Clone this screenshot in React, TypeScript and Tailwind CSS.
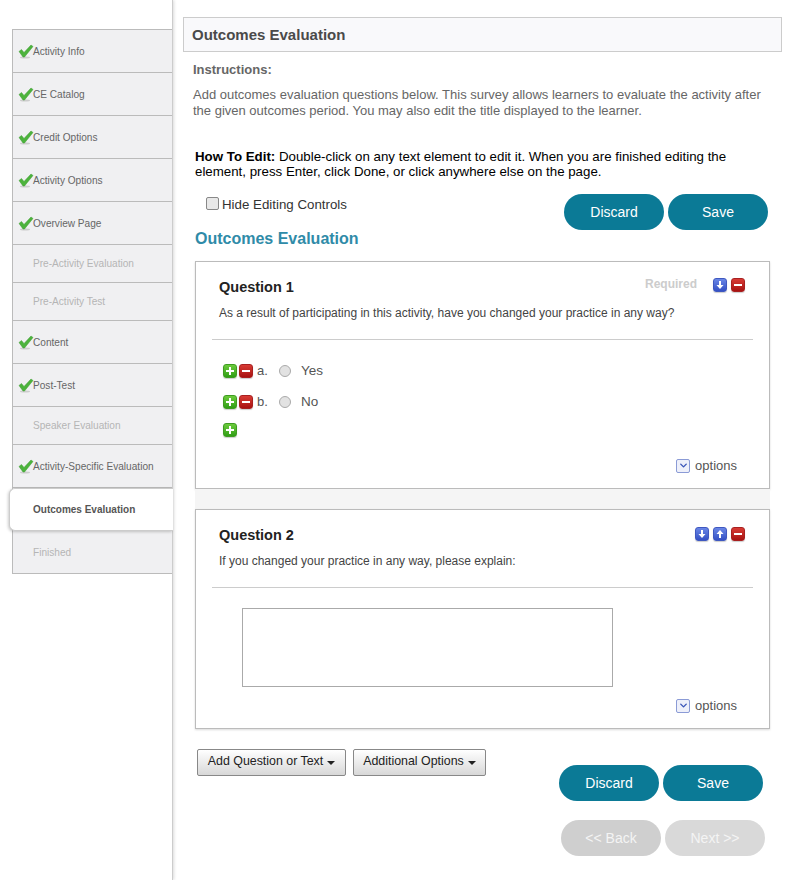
import { ChevronDown } from 'lucide-react'

const FONT = "font-['Liberation_Sans',Arial,sans-serif]"

const steps = [
  { label: 'Activity Info', state: 'done' },
  { label: 'CE Catalog', state: 'done' },
  { label: 'Credit Options', state: 'done' },
  { label: 'Activity Options', state: 'done' },
  { label: 'Overview Page', state: 'done' },
  { label: 'Pre-Activity Evaluation', state: 'off' },
  { label: 'Pre-Activity Test', state: 'off' },
  { label: 'Content', state: 'done' },
  { label: 'Post-Test', state: 'done' },
  { label: 'Speaker Evaluation', state: 'off' },
  { label: 'Activity-Specific Evaluation', state: 'done' },
  { label: 'Outcomes Evaluation', state: 'active' },
  { label: 'Finished', state: 'last' },
]

function Check() {
  return (
    <svg width="16" height="15" viewBox="0 0 16 15" className="absolute left-[5px] top-[14px]">
      <ellipse cx="7" cy="13.5" rx="5" ry="1" fill="#ccc" />
      <path d="M1 7.5 L3.5 5.5 L6 8.5 L13 1 L15 2.5 L6.5 13 L5 13 Z" fill="#4cb33c" stroke="#3f9a32" strokeWidth="0.5" />
    </svg>
  )
}

function Step({ label, state }: { label: string; state: string }) {
  if (state === 'active') {
    return (
      <div className="relative z-10 -ml-[4px] flex h-[43px] w-[164px] items-center rounded-l-[6px] border-y border-l border-[#ccc] bg-white pl-[23px] text-[10px] font-bold text-[#555] shadow-[-1px_1px_3px_rgba(0,0,0,0.2)]">
        {label}
      </div>
    )
  }
  if (state === 'off') {
    return (
      <div className="flex h-[38px] items-center border-b border-[#bbb] pl-[20px] text-[10.1px] text-[#b5b5b5]">
        {label}
      </div>
    )
  }
  if (state === 'last') {
    return (
      <div className="flex h-[43px] items-center border-b border-[#bbb] pl-[20px] pt-[2px] text-[10.1px] text-[#b5b5b5]">
        {label}
      </div>
    )
  }
  return (
    <div className="relative flex h-[43px] items-center border-b border-[#bbb] pl-[20px] pt-[2px] text-[10.1px] text-[#666]">
      <Check />
      {label}
    </div>
  )
}

function IconBtn({ kind }: { kind: 'plus' | 'minus' | 'down' | 'up' }) {
  const bg = {
    plus: 'bg-gradient-to-b from-[#6ccc3c] to-[#2f9e14] border-[#3f9c22]',
    minus: 'bg-gradient-to-b from-[#d83a34] to-[#a81010] border-[#a82020]',
    down: 'bg-gradient-to-b from-[#6a86e6] to-[#3450c4] border-[#3f58c0]',
    up: 'bg-gradient-to-b from-[#6a86e6] to-[#3450c4] border-[#3f58c0]',
  }[kind]
  return (
    <span className={`flex h-[14px] w-[14px] items-center justify-center rounded-[3px] border shadow-[0_1px_1px_rgba(0,0,0,0.2)] ${bg}`}>
      <svg width="10" height="10" viewBox="0 0 10 10" fill="#fff">
        {kind === 'plus' && <path d="M4 1h2v3h3v2H6v3H4V6H1V4h3z" />}
        {kind === 'minus' && <path d="M1 4h8v2H1z" />}
        {kind === 'down' && <path d="M4 1h2v4h2.5L5 9 1.5 5H4z" />}
        {kind === 'up' && <path d="M4 9h2V5h2.5L5 1 1.5 5H4z" />}
      </svg>
    </span>
  )
}

function Options() {
  return (
    <div className="flex items-center justify-end gap-[5px] pr-[16px] text-[13px] text-[#555]">
      <span className="flex h-[14px] w-[14px] items-center justify-center rounded-[2px] border border-[#8b9bd6] bg-[#eef0fa]">
        <ChevronDown size={11} strokeWidth={3} className="text-[#3a55b8]" />
      </span>
      options
    </div>
  )
}

function Answer({ letter, label }: { letter: string; label: string }) {
  return (
    <div className="flex h-[31px] items-center text-[13px] text-[#555]">
      <span className="flex gap-[2px]">
        <IconBtn kind="plus" />
        <IconBtn kind="minus" />
      </span>
      <span className="ml-[4px] w-[12px]">{letter}</span>
      <span className="ml-[10px] h-[12px] w-[12px] rounded-full border border-[#aaa] bg-[#e2e2e2]" />
      <span className="ml-[10px] mt-[1px] text-[13.5px]">{label}</span>
    </div>
  )
}

function PillBtn({ label, muted }: { label: string; muted?: string }) {
  return (
    <button className={`flex h-[36px] w-[100px] items-center justify-center rounded-[18px] text-[14px] ${muted ?? 'bg-[#0b7a96] text-white'}`}>
      {label}
    </button>
  )
}

function MenuBtn({ label, width }: { label: string; width: string }) {
  return (
    <button className={`flex h-[27px] items-center justify-center gap-[3px] rounded-[2px] border border-[#888] bg-gradient-to-b from-white to-[#d8d8d8] pb-[2px] text-[12.4px] text-[#222] ${width}`}>
      {label}
      <span className="ml-[1px] mt-[2px] h-0 w-0 border-x-[4px] border-t-[4px] border-x-transparent border-t-[#222]" />
    </button>
  )
}

export default function App() {
  return (
    <div className={`${FONT} flex h-[880px] w-[786px] overflow-hidden bg-white`}>
      {/* Sidebar */}
      <div className="h-full w-[173px] shrink-0 pl-[12px] pt-[29px] border-r border-[#ccc] shadow-[1px_0_3px_rgba(0,0,0,0.15)]">
        <div className="border-l border-t border-[#bbb] bg-[#f0f0f2]">
          {steps.map((s) => (
            <Step key={s.label} label={s.label} state={s.state} />
          ))}
        </div>
      </div>

      {/* Main */}
      <div className="ml-[10px] w-[599px] shrink-0 pt-[17px]">
        <div className="flex h-[35px] items-center border border-[#ccc] bg-[#f9f9fb] pl-[8px] pt-[2px] text-[15px] font-bold text-[#4a4a4a]">
          Outcomes Evaluation
        </div>

        <div className="ml-[10px] mt-[10px] text-[13px] font-bold leading-[16px] text-[#666]">Instructions:</div>
        <p className="ml-[10px] mt-[9px] w-[585px] text-[13px] leading-[16px] text-[#666]">
          Add outcomes evaluation questions below. This survey allows learners to evaluate the activity after the given
          outcomes period. You may also edit the title displayed to the learner.
        </p>

        <p className="ml-[12px] mt-[30px] w-[570px] text-[13.3px] leading-[15px] text-black">
          <b>How To Edit:</b> Double-click on any text element to edit it. When you are finished editing the element,
          press Enter, click Done, or click anywhere else on the page.
        </p>

        <div className="mt-[15px] flex h-[36px] items-start justify-between pr-[14px]">
          <label className="ml-[23px] mt-[1px] flex items-center text-[13.3px] text-[#333]">
            <span className="mb-[3px] mr-[3px] h-[13px] w-[13px] rounded-[2px] border border-[#888] bg-[#e8e8e8]" />
            Hide Editing Controls
          </label>
          <div className="flex gap-[4px]">
            <PillBtn label="Discard" />
            <PillBtn label="Save" />
          </div>
        </div>

        <h2 className="ml-[12px] mt-[-1px] text-[16px] font-bold leading-[20px] text-[#2f8ba8]">Outcomes Evaluation</h2>

        {/* Questions */}
        <div className="ml-[12px] mt-[12px] w-[575px]">
          <div className="h-[228px] border border-[#bbb] bg-white px-[16px] shadow-[0_1px_2px_rgba(0,0,0,0.15)]">
            <div className="flex items-start justify-between pl-[7px] pr-[8px] pt-[16px]">
              <span className="text-[14.5px] font-bold leading-[18px] text-[#222]">Question 1</span>
              <div className="flex items-start gap-[4px]">
                <span className="mr-[12px] mt-[-1px] text-[12px] font-bold leading-[14px] text-[#ccc]">Required</span>
                <IconBtn kind="down" />
                <IconBtn kind="minus" />
              </div>
            </div>
            <p className="mt-[10px] pl-[7px] text-[12px] leading-[14px] text-[#444]">
              As a result of participating in this activity, have you changed your practice in any way?
            </p>
            <div className="mt-[19px] border-t border-[#ccc]" />
            <div className="ml-[11px] mt-[15px]">
              <Answer letter="a." label="Yes" />
              <Answer letter="b." label="No" />
              <div className="mt-[6px]">
                <IconBtn kind="plus" />
              </div>
            </div>
            <div className="mt-[19px]">
              <Options />
            </div>
          </div>

          <div className="h-[20px] bg-[#f5f5f5]" />

          <div className="h-[220px] border border-[#bbb] bg-white px-[16px] shadow-[0_1px_2px_rgba(0,0,0,0.15)]">
            <div className="flex items-start justify-between pl-[7px] pr-[8px] pt-[16px]">
              <span className="text-[14.5px] font-bold leading-[18px] text-[#222]">Question 2</span>
              <div className="mt-[1px] flex gap-[4px]">
                <IconBtn kind="down" />
                <IconBtn kind="up" />
                <IconBtn kind="minus" />
              </div>
            </div>
            <p className="mt-[10px] pl-[7px] text-[12px] leading-[14px] text-[#444]">
              If you changed your practice in any way, please explain:
            </p>
            <div className="mt-[19px] border-t border-[#ccc]" />
            <div className="ml-[30px] mt-[20px] h-[79px] w-[371px] border border-[#aaa] bg-white" />
            <div className="mt-[9px]">
              <Options />
            </div>
          </div>
        </div>

        {/* Footer */}
        <div className="ml-[14px] mt-[20px] flex gap-[7px]">
          <MenuBtn label="Add Question or Text" width="w-[149px]" />
          <MenuBtn label="Additional Options" width="w-[133px]" />
        </div>
        <div className="mr-[19px] mt-[-11px] flex justify-end gap-[4px]">
          <PillBtn label="Discard" />
          <PillBtn label="Save" />
        </div>
        <div className="mr-[17px] mt-[19px] flex justify-end gap-[4px]">
          <PillBtn label="<< Back" muted="bg-[#cfcfcf] text-[#f4f4f4]" />
          <PillBtn label="Next >>" muted="bg-[#d9d9d9] text-[#f4f4f4]" />
        </div>
      </div>
    </div>
  )
}
